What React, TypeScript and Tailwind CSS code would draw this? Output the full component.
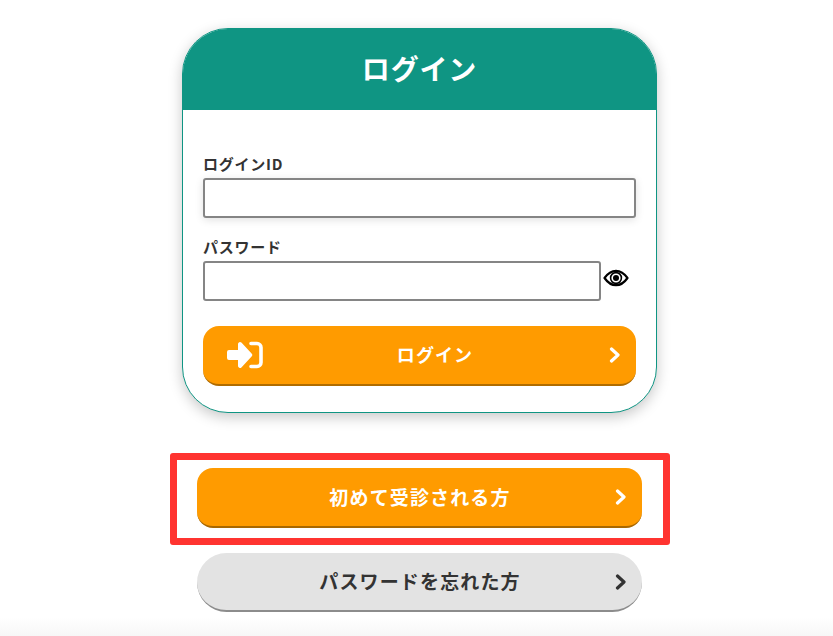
const font = { fontFamily: '"Noto Sans CJK JP", "Noto Sans", sans-serif' };

function Chevron({ color }: { color: string }) {
  return (
    <svg width="12" height="16" viewBox="0 0 12 16" fill="none" className="shrink-0">
      <path d="M2.5 2 L9 8 L2.5 14" stroke={color} strokeWidth="3.2" strokeLinecap="round" strokeLinejoin="round" />
    </svg>
  );
}

function LoginIcon() {
  return (
    <svg width="36" height="28" viewBox="0 0 36 28" fill="white">
      <path d="M0 11 a2 2 0 0 1 2-2 H11 V3 a2 2 0 0 1 3.4-1.4 L24.6 12.5 a2 2 0 0 1 0 3 L14.4 26.4 A2 2 0 0 1 11 25 V19 H2 a2 2 0 0 1-2-2 Z" />
      <path d="M24 2.5 H30 a4 4 0 0 1 4 4 V21.5 a4 4 0 0 1-4 4 H24" fill="none" stroke="white" strokeWidth="3.6" strokeLinecap="round" />
    </svg>
  );
}

function EyeIcon() {
  return (
    <svg width="26" height="18" viewBox="0 0 26 18" className="shrink-0 ml-[2px] -mt-[7px]">
      <path d="M1.5 9 C5 4 9 1.8 13 1.8 C17 1.8 21 4 24.5 9 C21 14 17 16.2 13 16.2 C9 16.2 5 14 1.5 9 Z" fill="none" stroke="black" strokeWidth="2.2" strokeLinejoin="round" />
      <circle cx="13" cy="9" r="5.4" fill="none" stroke="black" strokeWidth="1.6" />
      <circle cx="13" cy="9" r="3" fill="black" />
    </svg>
  );
}

export default function App() {
  return (
    <div style={font} className="relative h-[636px] w-[833px] overflow-hidden bg-white text-[#333]">
      <div className="flex flex-col items-center pt-7 bg-gradient-to-b from-white from-[97%] to-[#f7f7f7] h-full">
        {/* Login card */}
        <div className="w-[475px] h-[385px] ml-[6px] rounded-[46px] border border-[#0f9583] bg-white overflow-hidden shadow-[0_4px_14px_rgba(0,0,0,0.22)]">
          <div className="h-[81px] bg-[#0f9583] flex items-center justify-center text-white text-[28px] font-bold tracking-[0.03em] pb-[3px]">
            ログイン
          </div>
          <div className="px-5 pt-[41px]">
            <label className="block text-[15px] leading-[25px] pb-[2px] font-bold tracking-[0.05em]">ログインID</label>
            <input className="block w-[433px] h-10 bg-white rounded-[3px] border-2 border-[#858585] shadow-[0_2px_8px_rgba(0,0,0,0.12)]" />
            <label className="block text-[15px] leading-[24px] pb-[2px] font-bold mt-[17px] tracking-[0.05em]">パスワード</label>
            <div className="flex items-center">
              <input type="password" className="block w-[398px] h-10 bg-white rounded-[3px] border-2 border-[#858585]" />
              <EyeIcon />
            </div>
            <button className="mt-[25px] w-[433px] h-[60px] rounded-[16px] bg-[#ff9b00] border-b-2 border-[#b06c00] flex items-center pl-6 pr-[15px] text-white text-[18px] font-bold">
              <LoginIcon />
              <span className="flex-1 text-center pl-[4px] pr-[6px] pb-[2px] tracking-[0.06em]">ログイン</span>
              <Chevron color="white" />
            </button>
          </div>
        </div>

        {/* Red annotation box around first-time button */}
        <div className="mt-10 w-[500px] h-[92px] ml-[7px] rounded-[3px] border-[7px] border-[#ff3430] px-5 pt-2">
          <button className="w-[445px] h-[60px] rounded-[16px] bg-[#ff9b00] border-b-2 border-[#a96800] flex items-center pl-[28px] pr-[15px] text-white text-[19px] font-bold">
            <span className="flex-1 text-center tracking-[0.06em]">初めて受診される方</span>
            <Chevron color="white" />
          </button>
        </div>

        <button className="mt-2 w-[445px] h-[59px] ml-[6px] rounded-[30px] bg-[#e3e3e3] border-b-2 border-[#8c8c8c] flex items-center pl-[28px] pr-[15px] text-[#333] text-[19px] font-bold">
          <span className="flex-1 text-center tracking-[0.06em]">パスワードを忘れた方</span>
          <Chevron color="#333" />
        </button>
      </div>
    </div>
  );
}
